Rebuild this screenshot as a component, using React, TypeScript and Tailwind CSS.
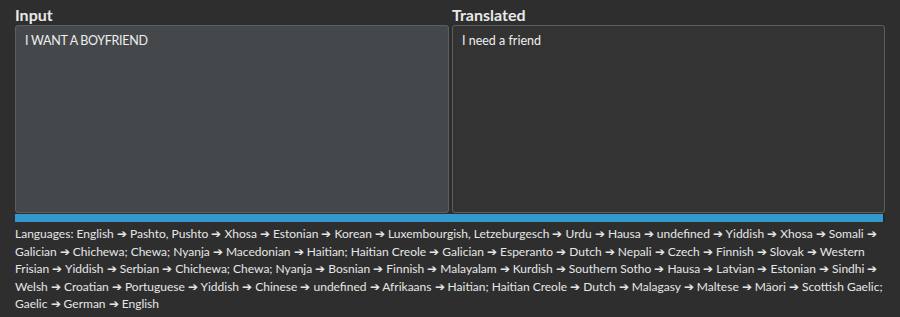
const languages = [
  'English', 'Pashto, Pushto', 'Xhosa', 'Estonian', 'Korean', 'Luxembourgish, Letzeburgesch', 'Urdu', 'Hausa',
  'undefined', 'Yiddish', 'Xhosa', 'Somali', 'Galician', 'Chichewa; Chewa; Nyanja', 'Macedonian',
  'Haitian; Haitian Creole', 'Galician', 'Esperanto', 'Dutch', 'Nepali', 'Czech', 'Finnish', 'Slovak',
  'Western Frisian', 'Yiddish', 'Serbian', 'Chichewa; Chewa; Nyanja', 'Bosnian', 'Finnish', 'Malayalam',
  'Kurdish', 'Southern Sotho', 'Hausa', 'Latvian', 'Estonian', 'Sindhi', 'Welsh', 'Croatian', 'Portuguese',
  'Yiddish', 'Chinese', 'undefined', 'Afrikaans', 'Haitian; Haitian Creole', 'Dutch', 'Malagasy', 'Maltese',
  'Māori', 'Scottish Gaelic; Gaelic', 'German', 'English',
];

export default function App() {
  return (
    <div className="min-h-[317px] bg-[#2e2e2e] px-[15px] pt-[4px] text-[#e6e6e6] font-['Lato',sans-serif]">
      <div className="flex gap-[3px]">
        <div className="flex w-[434px] flex-col">
          <h2 className="text-[16px] font-bold leading-[21px] text-[#e8e8e8]">Input</h2>
          <textarea
            className="h-[188px] resize-none rounded-[3px] border border-[#5c5e60] bg-[#45484b] px-[9px] py-[6px] font-['Lato',sans-serif] text-[12.5px] leading-[17px] tracking-[-0.3px] text-[#eeeeee] outline-none"
            defaultValue="I WANT A BOYFRIEND"
          />
        </div>
        <div className="flex w-[433px] flex-col">
          <h2 className="text-[16px] font-bold leading-[21px] text-[#e8e8e8]">Translated</h2>
          <textarea
            readOnly
            className="h-[188px] resize-none rounded-[3px] border border-[#5c5e60] bg-[#333333] px-[9px] py-[6px] font-['Lato',sans-serif] text-[12.5px] leading-[17px] text-[#eeeeee] outline-none"
            defaultValue="I need a friend"
          />
        </div>
      </div>
      <div className="mt-[1px] flex h-[8px] w-[870px]">
        <div className="h-full flex-1 bg-[#3399cc]" />
        <div className="h-full w-[2px] bg-[#1e2a30]" />
      </div>
      <p className="w-[870px] pt-[3px] text-[12px] leading-[17.5px] text-[#e6e6e6]">
        Languages: {languages.join(' ➔ ')}
      </p>
    </div>
  );
}
